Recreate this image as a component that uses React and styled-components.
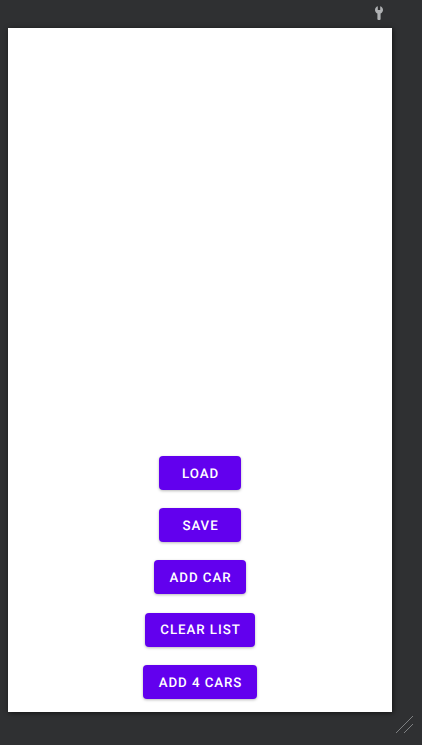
import React from "react";
import styled, { createGlobalStyle } from "styled-components";

const GlobalStyle = createGlobalStyle`
  * { box-sizing: border-box; }
  body { margin: 0; background: #2f3032; }
`;

const Workspace = styled.div`
  display: flex;
  flex-direction: column;
  width: 422px;
  height: 745px;
  overflow: hidden;
  background: #2f3032;
`;

const TopBar = styled.header`
  display: flex;
  flex: 0 0 28px;
  justify-content: flex-end;
  padding: 6px 38px 0 0;
`;

const WrenchIcon = styled.svg`
  display: block;
  width: 10px;
  height: 14px;
`;

const DeviceScreen = styled.main`
  display: flex;
  flex: 0 0 684px;
  flex-direction: column;
  align-items: center;
  justify-content: flex-end;
  gap: 18.3px;
  width: 384px;
  margin-left: 8px;
  padding-bottom: 13px;
  background: #fff;
  box-shadow: 1px 1px 5px rgba(0, 0, 0, 0.6);
`;

const Button = styled.button`
  width: ${(p) => p.$width}px;
  height: 34px;
  padding: 2.8px 0 0 1px;
  border: 0;
  border-radius: 4px;
  background: #6200ee;
  color: #fff;
  font: 500 13.3px/1 Roboto, sans-serif;
  letter-spacing: 0.94px;
  white-space: nowrap;
  text-rendering: geometricPrecision;
  box-shadow: 0 1px 3px rgba(0, 0, 0, 0.28);
`;

const Footer = styled.footer`
  display: flex;
  flex: 1;
  justify-content: flex-end;
  padding: 3px 8px 0 0;
`;

const ResizeGrip = styled.svg`
  display: block;
  width: 19px;
  height: 19px;
`;

const actions = [
  { label: "LOAD", width: 82 },
  { label: "SAVE", width: 82 },
  { label: "ADD CAR", width: 92 },
  { label: "CLEAR LIST", width: 110 },
  { label: "ADD 4 CARS", width: 114 },
];

export default function App() {
  return (
    <Workspace>
      <GlobalStyle />
      <TopBar>
        <WrenchIcon viewBox="0 0 10 14" aria-label="Settings">
          <path
            d="M3.8 0.2V4H6.2V0.2C8 0.8 9 2.2 9 4C9 5.6 8.1 6.8 6.6 7.5V13Q6.6 14 5.6 14H4.4Q3.4 14 3.4 13V7.5C1.9 6.8 1 5.6 1 4C1 2.2 2 0.8 3.8 0.2Z"
            fill="#afb1b3"
          />
        </WrenchIcon>
      </TopBar>
      <DeviceScreen>
        {actions.map(({ label, width }) => (
          <Button key={label} $width={width}>
            {label}
          </Button>
        ))}
      </DeviceScreen>
      <Footer>
        <ResizeGrip viewBox="0 0 19 19" aria-hidden="true">
          <path d="M1 18L18 1M9 18L18 9" stroke="#7e8082" strokeWidth="1" fill="none" />
        </ResizeGrip>
      </Footer>
    </Workspace>
  );
}
